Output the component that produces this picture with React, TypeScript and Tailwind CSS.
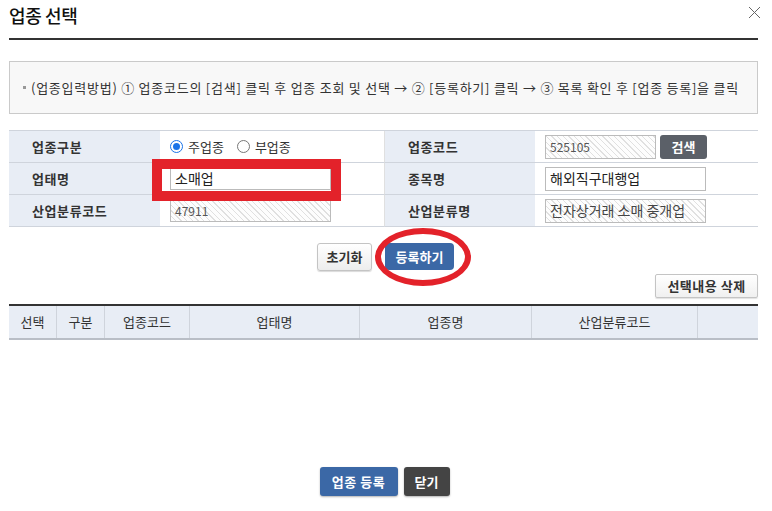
import React from "react";

const hatch =
  "bg-[repeating-linear-gradient(45deg,#fdfdfd_0px,#fdfdfd_3px,#e0e0e0_3px,#e0e0e0_4px)]";

function Label({ children }: { children: React.ReactNode }) {
  return (
    <div className="flex items-center pl-[23px] bg-[#e8edf5] border-b border-[#cfd4dc] text-[13px] font-bold tracking-[0.6px] text-[#333]">
      {children}
    </div>
  );
}

function Cell({ children, last }: { children: React.ReactNode; last?: boolean }) {
  return (
    <div
      className={
        "flex items-center pl-[10px] border-b border-[#cfd4dc] bg-white " +
        (last ? "" : "border-r border-r-[#e0e0e0]")
      }
    >
      {children}
    </div>
  );
}

function Radio({ checked, label }: { checked?: boolean; label: string }) {
  return (
    <label className="flex items-center gap-[5px] text-[13px] text-[#333]">
      <span
        className={
          "w-[13px] h-[13px] rounded-full border flex items-center justify-center " +
          (checked ? "border-[#1a73e8]" : "border-[#777]")
        }
      >
        {checked && <span className="w-[7px] h-[7px] rounded-full bg-[#1a73e8]" />}
      </span>
      {label}
    </label>
  );
}

export default function App() {
  const cols = ["선택", "구분", "업종코드", "업태명", "업종명", "산업분류코드", ""];
  const widths = ["w-[48px]", "w-[48px]", "w-[85px]", "w-[170px]", "w-[172px]", "w-[166px]", "flex-1"];

  return (
    <div
      className="relative w-[772px] h-[511px] bg-white overflow-hidden text-[#333]"
      style={{ fontFamily: '"Noto Sans CJK KR", "Noto Sans", sans-serif' }}
    >
      {/* close button */}
      <div className="absolute right-[11px] top-[6px] w-[13px] h-[13px]">
        <svg width="13" height="13" viewBox="0 0 13 13">
          <path d="M1 1L12 12M12 1L1 12" stroke="#666" strokeWidth="1" />
        </svg>
      </div>

      <div className="ml-[9px] w-[749px]">
        <div className="h-[38px] pt-[3px] text-[18px] font-medium leading-[24px] tracking-[-0.4px] text-[#111]">업종 선택</div>
        <div className="h-[2px] bg-[#333]" />

        {/* info */}
        <div className="mt-[21px] h-[53px] border border-[#cacaca] bg-[#f8f8f8] flex items-center pl-[13px] text-[13px] text-[#333] tracking-[0.75px]">
          <span className="w-[3px] h-[3px] bg-[#999] mr-[5px]" />
          (업종입력방법) ① 업종코드의 [검색] 클릭 후 업종 조회 및 선택 → ② [등록하기] 클릭 → ③ 목록 확인 후 [업종 등록]을 클릭
        </div>

        {/* form table */}
        <div className="relative mt-[16px] border-t border-[#cfd4dc] grid grid-cols-[151px_225px_150px_223px] auto-rows-[32px]">
          <Label>업종구분</Label>
          <Cell>
            <div className="flex items-center gap-[13px]">
              <Radio checked label="주업종" />
              <Radio label="부업종" />
            </div>
          </Cell>
          <Label>업종코드</Label>
          <Cell last>
            <div className="flex items-center gap-[4px]">
              <div className={"w-[111px] h-[24px] border border-[#bbb] flex items-center pl-[4px] text-[12px] text-[#555] " + hatch}>
                525105
              </div>
              <button className="w-[47px] h-[24px] rounded-[3px] bg-[#5b6068] text-white text-[13px] font-bold">검색</button>
            </div>
          </Cell>

          <Label>업태명</Label>
          <Cell>
            <div className="w-[161px] h-[22px] border border-[#bbb] bg-white flex items-center pl-[4px] text-[14px] text-[#222]">
              소매업
            </div>
          </Cell>
          <Label>종목명</Label>
          <Cell last>
            <div className="w-[161px] h-[24px] border border-[#bbb] bg-white flex items-center pl-[4px] text-[14px] text-[#222]">
              해외직구대행업
            </div>
          </Cell>

          <Label>산업분류코드</Label>
          <Cell>
            <div className={"w-[161px] h-[22px] border border-[#bbb] flex items-center pl-[4px] text-[12px] text-[#555] " + hatch}>
              47911
            </div>
          </Cell>
          <Label>산업분류명</Label>
          <Cell last>
            <div className={"w-[161px] h-[24px] border border-[#bbb] flex items-center pl-[4px] text-[14px] text-[#444] " + hatch}>
              전자상거래 소매 중개업
            </div>
          </Cell>

          {/* red annotation box */}
          <div className="absolute left-[143px] top-[28px] w-[189px] h-[42px] border-[10px] border-[#e3222a]" />
        </div>

        {/* action buttons */}
        <div className="relative mt-[16px] flex justify-center gap-[13px] pl-[4px]">
          <button className="w-[55px] h-[28px] rounded-[3px] border border-[#c4c4c4] bg-gradient-to-b from-white to-[#ededed] shadow-[0_1px_1px_rgba(0,0,0,0.15)] text-[13px] font-bold text-[#333]">
            초기화
          </button>
          <button className="w-[69px] h-[27px] rounded-[4px] bg-[#3b68a6] text-white text-[13px] font-bold">
            등록하기
          </button>
          <div className="absolute left-[366px] top-[-15px] w-[96px] h-[58px] rounded-[50%] border-[6px] border-[#e3222a]" />
        </div>

        <div className="mt-[3px] flex justify-end">
          <button className="w-[103px] h-[24px] rounded-[2px] border border-[#c4c4c4] bg-gradient-to-b from-white to-[#f0f0f0] shadow-[0_1px_1px_rgba(0,0,0,0.12)] text-[13px] font-bold tracking-[0.5px] text-[#333]">
            선택내용 삭제
          </button>
        </div>

        {/* list table */}
        <div className="mt-[6px] border-t-2 border-[#333] border-b-2 border-b-[#b9bec6] bg-[#e8edf5] flex h-[36px]">
          {cols.map((c, i) => (
            <div
              key={i}
              className={
                widths[i] +
                " flex items-center justify-center text-[13px] text-[#333] " +
                (i < cols.length - 1 ? "border-r border-[#cfd4dc]" : "")
              }
            >
              {c}
            </div>
          ))}
        </div>

        {/* bottom */}
        <div className="mt-[127px] flex justify-center gap-[6px] pl-[2px]">
          <button className="w-[78px] h-[29px] rounded-[3px] bg-[#3b68a6] shadow-[0_1px_2px_rgba(0,0,0,0.3)] text-white text-[13px] font-bold tracking-[0.5px]">
            업종 등록
          </button>
          <button className="w-[46px] h-[29px] rounded-[3px] bg-[#444] shadow-[0_1px_2px_rgba(0,0,0,0.3)] text-white text-[13px] font-bold">
            닫기
          </button>
        </div>
      </div>
    </div>
  );
}
